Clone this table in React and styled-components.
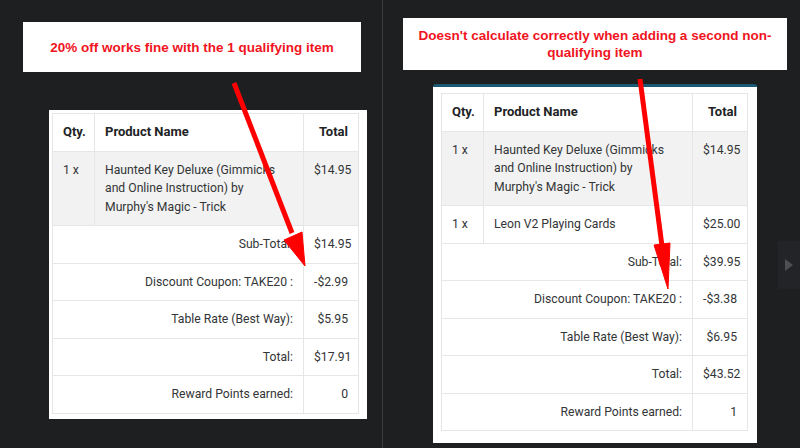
import styled, { createGlobalStyle } from "styled-components"

const GlobalStyle = createGlobalStyle`
    *, *::before, *::after {
        box-sizing: border-box;
    }
    body {
        margin: 0;
        background: #1e1f21;
    }
`
const Page = styled.div`
    display: flex;
    flex-direction: row;
    height: 448px;
    overflow: hidden;
    position: relative;
    width: 800px;
`
const Panel = styled.div`
    display: flex;
    flex-direction: column;
    flex: ${p => p.$wide ? "1" : "0 0 382px"};
    padding: ${p => p.$wide ? "18px 0 0 20px" : "22px 0 0 23px"};
    position: relative;
`
const Divider = styled.div`
    background: #3b3c3e;
    flex: 0 0 1px;
`
const Notice = styled.div`
    align-items: center;
    background: #fff;
    color: #f0141e;
    display: flex;
    font-family: "Liberation Sans", Arial, sans-serif;
    font-size: 13.5px;
    font-weight: 700;
    height: ${p => p.$h}px;
    justify-content: center;
    line-height: 17px;
    text-align: center;
    width: ${p => p.$w}px;
`
const Card = styled.div`
    background: #fff;
    border-top: ${p => p.$accent ? "3px solid #1b5873" : "none"};
    border-radius: ${p => p.$accent ? "3px 3px 0 0" : "0"};
    margin: ${p => p.$m};
    padding: ${p => p.$pad};
    width: ${p => p.$w}px;
`
const Table = styled.table`
    border-collapse: collapse;
    color: #333537;
    font-family: Roboto, "Open Sans", sans-serif;
    font-size: 12.2px;
    line-height: 18.5px;
    table-layout: fixed;
    width: 306px;
`
const Th = styled.th`
    border: 1px solid #e6e6e6;
    color: #212325;
    font-size: 13px;
    font-weight: 700;
    padding: 9px 10px;
    text-align: ${p => p.$right ? "right" : "left"};
`
const Row = styled.tr`
    background: ${p => p.$shade ? "#f2f2f2" : "#fff"};
`
const Td = styled.td`
    border: 1px solid #e6e6e6;
    padding: 9px 10px;
    text-align: ${p => p.$right ? "right" : "left"};
    vertical-align: top;
    white-space: nowrap;
`
const Overlay = styled.svg`
    left: 0;
    pointer-events: none;
    position: absolute;
    top: 0;
`
const NextButton = styled.div`
    align-items: center;
    background: #222427;
    display: flex;
    height: 48px;
    justify-content: center;
    position: absolute;
    right: 0;
    top: 241px;
    width: 22px;
    svg {
        fill: #4d4f52;
    }
`

const Order = ({ items, totals }) => (
    <Table>
        <colgroup>
            <col style={{ width: 42 }} />
            <col style={{ width: 209 }} />
            <col style={{ width: 55 }} />
        </colgroup>
        <thead>
            <tr>
                <Th>Qty.</Th>
                <Th>Product Name</Th>
                <Th $right>Total</Th>
            </tr>
        </thead>
        <tbody>
            {items.map(({ qty, name, price, shade }, i) =>
                <Row key={i} $shade={shade}>
                    <Td>{qty}</Td>
                    <Td>{name}</Td>
                    <Td $right>{price}</Td>
                </Row>
            )}
            {totals.map(([label, value]) =>
                <Row key={label}>
                    <Td colSpan={2} $right>{label}</Td>
                    <Td $right>{value}</Td>
                </Row>
            )}
        </tbody>
    </Table>
)

const haunted = {
    qty: "1 x",
    price: "$14.95",
    shade: true,
    name: <>Haunted Key Deluxe (Gimmicks<br />and Online Instruction) by<br />Murphy's Magic - Trick</>
}

const App = () => {
    return (
        <>
            <GlobalStyle />
            <Page>
                <Panel>
                    <Notice $w={338} $h={50}>20% off works fine with the 1 qualifying item</Notice>
                    <Card $w={318} $m="38px 0 0 26px" $pad="3px 9px 5px 3px">
                        <Order
                            items={[haunted]}
                            totals={[
                                ["Sub-Total:", "$14.95"],
                                ["Discount Coupon: TAKE20 :", "-$2.99"],
                                ["Table Rate (Best Way):", "$5.95"],
                                ["Total:", "$17.91"],
                                ["Reward Points earned:", "0"],
                            ]}
                        />
                    </Card>
                </Panel>
                <Divider />
                <Panel $wide>
                    <Notice $w={384} $h={52}>Doesn't calculate correctly when adding a second non-<br />qualifying item</Notice>
                    <Card $accent $w={324} $m="14px 0 0 30px" $pad="6px 10px 12px 8px">
                        <Order
                            items={[
                                haunted,
                                { qty: "1 x", name: "Leon V2 Playing Cards", price: "$25.00" },
                            ]}
                            totals={[
                                ["Sub-Total:", "$39.95"],
                                ["Discount Coupon: TAKE20 :", "-$3.38"],
                                ["Table Rate (Best Way):", "$6.95"],
                                ["Total:", "$43.52"],
                                ["Reward Points earned:", "1"],
                            ]}
                        />
                    </Card>
                    <NextButton>
                        <svg width="8" height="12" viewBox="0 0 8 12"><path d="M0 0 L8 6 L0 12 Z" /></svg>
                    </NextButton>
                </Panel>
                <Overlay width="800" height="448" viewBox="0 0 800 448">
                    <g fill="#ff0000" stroke="#ff0000">
                        <line x1="234" y1="83" x2="292" y2="233" strokeWidth="5" />
                        <polygon points="305,266 284,240 302,232" strokeWidth="1" />
                        <line x1="640" y1="79" x2="662" y2="246" strokeWidth="5" />
                        <polygon points="668,289 654,245 670,243" strokeWidth="1" />
                    </g>
                </Overlay>
            </Page>
        </>
    )
}

export default App
